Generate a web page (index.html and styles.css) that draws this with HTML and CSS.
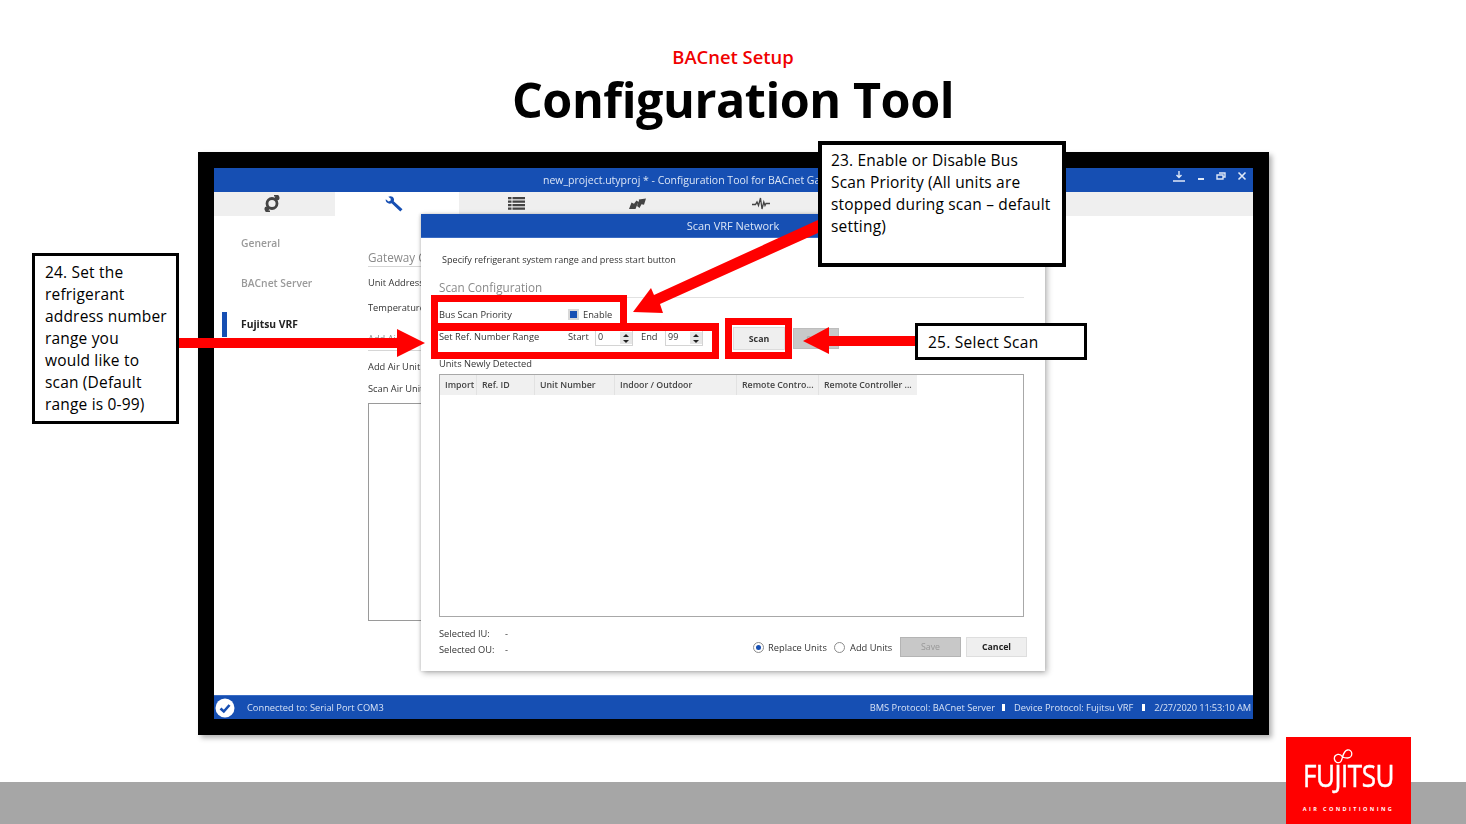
FILE: index.html
```html
<!DOCTYPE html>
<html lang="en">
<head>
<meta charset="utf-8">
<title>Configuration Tool</title>
<link rel="stylesheet" href="styles.css">
</head>
<body>
<div class="slide">
  <header class="head">
    <div class="kicker">BACnet Setup</div>
    <h1 class="title">Configuration Tool</h1>
  </header>

  <div class="frame">
    <div class="app">
      <div class="titlebar">
        <span class="titletext">new_project.utyproj * - Configuration Tool for BACnet Gateway</span>
        <div class="winbtns">
          <svg class="wb" width="14" height="13" viewBox="0 0 14 13"><path d="M7 1v6M4.500 5 7 7.600 9.500 5M1 11h12" fill="none" stroke="#dfe8f7" stroke-width="1.400"/></svg>
          <svg class="wb" width="8" height="13" viewBox="0 0 8 13"><path d="M1 9h6" stroke="#dfe8f7" stroke-width="2"/></svg>
          <svg class="wb" width="10" height="13" viewBox="0 0 10 13"><path d="M3 3h6v4H7M1 5h6v4H1z" fill="none" stroke="#dfe8f7" stroke-width="1.400"/></svg>
          <svg class="wb" width="10" height="13" viewBox="0 0 10 13"><path d="M1.500 2.500l7 7M8.500 2.500l-7 7" stroke="#dfe8f7" stroke-width="1.600"/></svg>
        </div>
      </div>
      <div class="tabs">
        <div class="tab">
          <svg width="18" height="17" viewBox="0 0 18 17"><circle cx="9" cy="8.500" r="5" fill="none" stroke="#444" stroke-width="2.800"/><circle cx="14.200" cy="3" r="2.400" fill="#444"/><circle cx="3.800" cy="14" r="2.400" fill="#444"/><path d="M11 .8h4.500M2.500 16.200H7" stroke="#444" stroke-width="1.400"/></svg>
        </div>
        <div class="tab tab-on">
          <svg width="18" height="16" viewBox="0 0 18 16"><path d="M.8 3.200 3.500 5.500 5.500 4.800 5.800 2.800 3.300.8C5.500-.3 8 .4 8.800 2.600 9.200 3.700 9 4.600 8.700 5.300L17.500 13.300 15.300 15.600 6.600 7.300C5.500 7.800 4 7.800 2.800 7.100 1.200 6.200.4 4.700.8 3.200z" fill="#164fb3"/></svg>
        </div>
        <div class="tab">
          <svg width="17" height="13" viewBox="0 0 17 13"><path d="M0 1.200h3.500M4.500 1.200h12.500M0 4.700h3.500M4.500 4.700h12.500M0 8.200h3.500M4.500 8.200h12.500M0 11.700h3.500M4.500 11.700h12.500" stroke="#444" stroke-width="2.200"/></svg>
        </div>
        <div class="tab">
          <svg width="17" height="12" viewBox="0 0 17 12"><path d="M0 11 2.500 4.500 5 5.800 7.500 2.500 9.500 4 8.500 6 6.500 11zM8 8 10 2.500 9.800 1.500 17 .5 15 6.800 12.500 6.200 10.500 10z" fill="#444"/></svg>
        </div>
        <div class="tab tab-last">
          <svg width="18" height="13" viewBox="0 0 18 13"><path d="M0 7.500h3.500L5 5l1.500 3.500L8.500 1l1.500 11 1.800-7 1.200 3.500L14 6.500h4" fill="none" stroke="#444" stroke-width="1.300"/></svg>
        </div>
      </div>
      <div class="content">
        <nav class="side">
          <div class="side-item">General</div>
          <div class="side-item">BACnet Server</div>
          <div class="side-item side-on">Fujitsu VRF</div>
        </nav>
        <section class="panel">
          <div class="panel-head">Gateway C</div>
          <div class="panel-row r1">Unit Address</div>
          <div class="panel-row r2">Temperature</div>
          <div class="panel-head p2">Add Air</div>
          <div class="panel-row r3">Add Air Unit</div>
          <div class="panel-row r4">Scan Air Unit</div>
          <div class="panel-box"></div>
        </section>
      </div>
      <footer class="status">
        <svg class="check" width="20" height="20" viewBox="0 0 20 20"><circle cx="10" cy="10" r="9.500" fill="#fff"/><path d="M5.500 10.500 8.800 13.500 14.500 7" fill="none" stroke="#164fb3" stroke-width="2.600"/></svg>
        <span class="conn">Connected to: Serial Port COM3</span>
        <span class="stat-right">
          <span>BMS Protocol: BACnet Server</span><i class="pip"></i>
          <span>Device Protocol: Fujitsu VRF</span><i class="pip pip-2"></i>
          <span class="stamp">2/27/2020 11:53:10 AM</span>
        </span>
      </footer>
    </div>

    <div class="modal">
      <div class="modal-head">Scan VRF Network</div>
      <div class="modal-body">
        <p class="hint">Specify refrigerant system range and press start button</p>
        <div class="section">Scan Configuration</div>
        <div class="row-bus">
          <span class="lab">Bus Scan Priority</span>
          <span class="cb"><i></i></span>
          <span>Enable</span>
        </div>
        <div class="row-range">
          <span class="lab">Set Ref. Number Range</span>
          <span class="st">Start</span>
          <span class="spin"><span>0</span><span class="arrows"><i class="up"></i><i class="down"></i></span></span>
          <span class="en">End</span>
          <span class="spin"><span>99</span><span class="arrows"><i class="up"></i><i class="down"></i></span></span>
          <span class="btn b-scan">Scan</span>
          <span class="btn b-stop">Stop</span>
        </div>
        <div class="units">Units Newly Detected</div>
        <div class="table">
          <div class="thead">
            <span class="c1">Import</span><span class="c2">Ref. ID</span><span class="c3">Unit Number</span><span class="c4">Indoor / Outdoor</span><span class="c5">Remote Contro...</span><span class="c6">Remote Controller ...</span>
          </div>
        </div>
        <div class="foot">
          <div class="sel">
            <div class="sel-row"><span class="sel-l">Selected IU:</span><span>-</span></div>
            <div class="sel-row"><span class="sel-l">Selected OU:</span><span>-</span></div>
          </div>
          <div class="actions">
            <span class="radio radio-on"></span><span class="rl1">Replace Units</span>
            <span class="radio"></span><span class="rl2">Add Units</span>
            <span class="btn2 b-save">Save</span>
            <span class="btn2 b-cancel">Cancel</span>
          </div>
        </div>
      </div>
    </div>
  </div>

  <div class="redbox rb1"></div>
  <div class="redbox rb2"></div>
  <div class="redbox rb3"></div>

  <svg class="arrows-layer" width="1466" height="824" viewBox="0 0 1466 824">
    <g fill="#ff0000">
      <path d="M179 338H397V329L425 343 397 357V348H179z"/>
      <path d="M803 341 829 327V336H916V346H829V354z"/>
      <path d="M818 220 818 233 660 304 663 313 633 312 651 288 654 295z"/>
    </g>
  </svg>

  <div class="callout c-23">23. Enable or Disable Bus<br>Scan Priority (All units are<br>stopped during scan – default<br>setting)</div>
  <div class="callout c-24">24. Set the<br>refrigerant<br>address number<br>range you<br>would like to<br>scan (Default<br>range is 0-99)</div>
  <div class="callout c-25">25. Select Scan</div>

  <div class="band"></div>
  <div class="logo">
    <svg class="loop" width="20" height="15" viewBox="0 0 20 15"><path d="M9.500 8C8 5.500 6.500 5 4.800 5.400 2.500 6 1 8 1.500 10.500 2 13 4.500 14.200 6.500 13.500 8.500 12.800 9 10 9.500 8 10.500 4.500 12 1.500 14.500 1 17 .6 18.800 2.500 18.800 4.800 18.800 7.300 16.800 9 14.500 9 12.500 9 10.800 8.700 9.500 8z" fill="none" stroke="#fff" stroke-width="1.300"/></svg>
    <div class="logo-word">FUJITSU</div>
    <div class="logo-sub">AIR CONDITIONING</div>
  </div>
</div>
</body>
</html>
```
FILE: styles.css
```css
* { box-sizing: border-box; }
html, body { margin: 0; padding: 0; background: #fff; }
body { width: 1466px; height: 824px; overflow: hidden; font-family: "Open Sans", sans-serif; }
.slide { position: relative; width: 1466px; height: 824px; overflow: hidden; background: #fff; padding-top: 45px; }

.head { text-align: center; height: 107px; }
.kicker { color: #f00000; font-size: 18.400px; font-weight: 600; line-height: 24px; }
.title { margin: 0; color: #000; font-size: 48.500px; font-weight: 700; line-height: 60px; letter-spacing: -0.450px; }

.frame { position: relative; margin-left: 198px; width: 1071px; height: 583px; background: #000; padding: 16px; box-shadow: 3px 3px 5px rgba(0,0,0,.3); }
.app { width: 1039px; height: 551px; background: #fff; display: flex; flex-direction: column; filter: blur(.35px); font-size: 9.300px; color: #333; overflow: hidden; }

.titlebar { height: 24px; background: #164fb3; color: #dbe5f6; display: flex; align-items: center; position: relative; font-size: 10.500px; flex: none; padding-left: 329px; }
.titletext { white-space: nowrap; }
.winbtns { position: absolute; right: 6px; top: 1px; display: flex; gap: 11px; align-items: center; height: 14px; }

.tabs { height: 24px; background: #efefef; display: flex; flex: none; }
.tab { width: 121px; display: flex; align-items: center; justify-content: center; padding: 0 6px 1px 0; }
.tab-on { background: #fff; width: 124px; }
.tab-last { width: 125px; }

.content { flex: 1; display: flex; min-height: 0; }
.side { width: 154px; padding-top: 19px; position: relative; flex: none; }
.side-item { font-size: 10.300px; font-weight: 600; color: #9a9a9a; padding-left: 27px; height: 40px; line-height: 16px; }
.side-on { color: #222; font-weight: 700; position: relative; margin-top: 1px; }
.side-on::before { content: ""; position: absolute; left: 8px; top: -4px; width: 5px; height: 25px; background: #164fb3; }

.panel { width: 60px; flex: none; padding-top: 33px; }
.panel-head { font-size: 11.700px; color: #8a8a8a; height: 18px; line-height: 16px; border-bottom: 1px solid #d6d6d6; white-space: nowrap; }
.panel-row { font-size: 9.300px; font-weight: 500; color: #333; line-height: 14px; white-space: nowrap; }
.r1 { margin-top: 9px; }
.r2 { margin-top: 11px; }
.p2 { margin-top: 16px; height: 20px; font-size: 9.300px; }
.r3 { margin-top: 9px; }
.r4 { margin-top: 8px; }
.panel-box { margin-top: 7px; height: 218px; border: 1px solid #9a9a9a; }

.status { height: 24px; flex: none; background: #164fb3; color: #d6e1f5; display: flex; align-items: center; padding: 0 2px 0 1px; border-top: 1px solid #3a6cc4; }
.check { flex: none; }
.conn { margin-left: 12px; }
.stat-right { margin-left: auto; display: flex; align-items: center; }
.pip { width: 3px; height: 7px; background: #fff; margin: 0 9px 0 7px; }
.pip-2 { margin-left: 9px; }
.stamp { letter-spacing: -.15px; }

.modal { position: absolute; left: 223px; top: 62px; width: 624px; height: 457px; background: #fff; box-shadow: 2px 2px 6px rgba(0,0,0,.3), -1px 0 3px rgba(0,0,0,.15); filter: blur(.35px); font-size: 9.300px; color: #333; display: flex; flex-direction: column; }
.modal-head { height: 24px; flex: none; background: #164fb3; border-bottom: 1px solid #3a6cc4; color: #dbe5f6; font-size: 11px; text-align: center; line-height: 24px; }
.modal-body { flex: 1; padding: 0 18px; }
.hint { margin: 15px 0 0 3px; line-height: 13px; font-size: 9.100px; font-weight: 500; }
.section { margin-top: 13px; font-size: 11.700px; line-height: 16px; color: #8a8a8a; height: 19px; border-bottom: 1px solid #e2e2e2; width: 585px; }
.row-bus { display: flex; align-items: center; height: 16px; margin-top: 8px; }
.lab { width: 129px; flex: none; }
.cb { width: 11px; height: 11px; background: #d8d8d8; padding: 2px; margin-right: 4px; display: block; }
.cb i { display: block; width: 7px; height: 7px; background: #164fb3; }
.row-range { display: flex; align-items: flex-start; margin-top: 8px; height: 27px; line-height: 14px; position: relative; }
.st { width: 27px; }
.spin { width: 38px; height: 16px; border: 1px solid #d4d4d4; display: flex; justify-content: space-between; padding-left: 2px; line-height: 12px; font-size: 9px; }
.arrows { width: 12px; margin: 1px 0; background: #e6e6e6; display: flex; flex-direction: column; align-items: center; justify-content: center; gap: 3px; }
.up { display: block; width: 0; height: 0; border-left: 3px solid transparent; border-right: 3px solid transparent; border-bottom: 3px solid #222; }
.down { display: block; width: 0; height: 0; border-left: 3px solid transparent; border-right: 3px solid transparent; border-top: 3px solid #222; }
.en { margin: 0 8px; width: 16px; }
.btn { position: absolute; display: block; text-align: center; font-weight: 700; }
.b-scan { left: 294px; top: -3px; width: 52px; height: 23px; line-height: 22px; background: #efefef; border: 1px solid #dcdcdc; font-size: 8.800px; }
.b-stop { left: 354px; top: -2px; width: 46px; height: 21px; line-height: 21px; background: #c8c8c8; color: #aaa; border: 1px solid #bdbdbd; font-size: 8.800px; }
.units { line-height: 13px; }
.table { margin-top: 4px; width: 585px; height: 243px; border: 1px solid #a8a8a8; }
.thead { display: flex; height: 20px; width: 477px; background: #f0f0f0; font-size: 8.800px; font-weight: 600; line-height: 20px; color: #444; }
.thead span { padding-left: 5px; border-right: 1px solid #e2e2e2; white-space: nowrap; overflow: hidden; }
.c1 { width: 37px; }
.c2 { width: 58px; }
.c3 { width: 80px; }
.c4 { width: 122px; }
.c5 { width: 82px; }
.c6 { width: 98px; border-right: 0 !important; }
.foot { display: flex; justify-content: space-between; margin-top: 9px; width: 588px; }
.sel-row { display: flex; height: 16px; line-height: 16px; }
.sel-l { width: 66px; }
.actions { display: flex; align-items: center; height: 20px; margin-top: 11px; }
.radio { width: 11px; height: 11px; border-radius: 50%; border: 1px solid #8c8c8c; background: #fff; display: block; margin-right: 4px; position: relative; }
.radio-on::after { content: ""; position: absolute; left: 2px; top: 2px; width: 5px; height: 5px; border-radius: 50%; background: #164fb3; }
.rl1 { width: 66px; }
.rl2 { width: 50px; margin-left: 1px; }
.btn2 { display: block; width: 61px; height: 20px; line-height: 19px; text-align: center; font-size: 8.800px; }
.b-save { background: #c8c8c8; color: #999; border: 1px solid #b4b4b4; margin-right: 5px; }
.b-cancel { background: #efefef; color: #222; font-weight: 700; border: 1px solid #dedede; }

.redbox { position: absolute; border: 7px solid #ff0000; }
.rb1 { left: 431px; top: 295px; width: 196px; height: 36px; border-bottom-width: 8px; }
.rb2 { left: 431px; top: 323px; width: 288px; height: 36px; border-top-width: 8px; }
.rb3 { left: 725px; top: 318px; width: 67px; height: 41px; }

.arrows-layer { position: absolute; left: 0; top: 0; pointer-events: none; }

.callout { position: absolute; background: #fff; border: 4px solid #000; color: #000; font-size: 15.500px; line-height: 22px; letter-spacing: .18px; padding: 4px 0 0 9px; white-space: nowrap; }
.c-23 { left: 818px; top: 141px; width: 248px; height: 126px; }
.c-24 { left: 32px; top: 253px; width: 147px; height: 171px; border-width: 3px; padding: 5px 0 0 10px; }
.c-25 { left: 915px; top: 323px; width: 172px; height: 37px; border-width: 3px; padding: 6px 0 0 10px; line-height: 21px; letter-spacing: .25px; }

.band { position: absolute; left: 0; right: 0; bottom: 0; height: 42px; background: #a6a6a6; }
.logo { position: absolute; left: 1286px; top: 737px; width: 125px; height: 87px; background: #ff0000; color: #fff; text-align: center; }
.loop { position: absolute; left: 47px; top: 12px; }
.logo-word { position: absolute; left: 0; right: 0; top: 19px; font-size: 31px; line-height: 38px; letter-spacing: -.6px; -webkit-text-stroke: .5px #fff; transform: scaleX(.84); }
.logo-sub { position: absolute; left: 0; right: 0; top: 67px; font-size: 5.500px; line-height: 10px; font-weight: 700; letter-spacing: 2.400px; }
```
